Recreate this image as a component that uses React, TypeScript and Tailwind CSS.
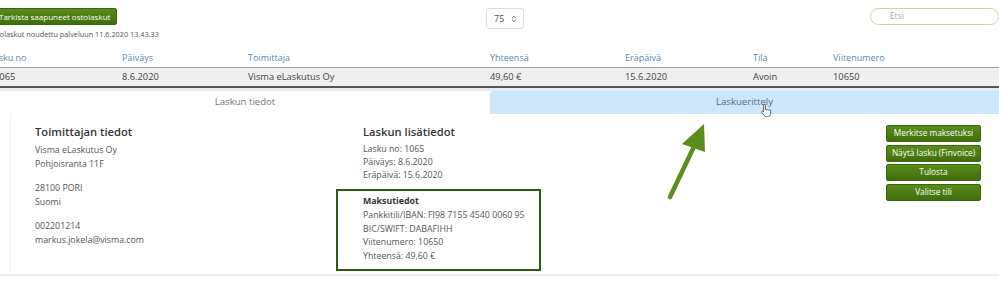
import { ChevronsUpDown } from "lucide-react";

const cols = "grid grid-cols-[122px_126px_242px_135px_128px_80px_1fr]";

function GreenButton({ label }: { label: string }) {
  return (
    <button className="w-[95px] h-[17px] rounded-[2px] border border-[#3b640c] bg-gradient-to-b from-[#5a8c1c] to-[#3f6e09] text-white text-[8.3px] leading-none whitespace-nowrap">
      {label}
    </button>
  );
}

function Arrow() {
  return (
    <svg width="60" height="90" viewBox="0 0 60 90" className="absolute left-[660px] top-[118px]">
      <line x1="10" y1="79" x2="40" y2="16" stroke="#5c8c1e" strokeWidth="4.5" strokeLinecap="round" />
      <polygon points="44,6 22,26 45,34" fill="#5c8c1e" />
    </svg>
  );
}

function Cursor() {
  return (
    <svg width="12" height="14" viewBox="0 0 12 14" className="absolute left-[761px] top-[103px]">
      <path
        d="M3.5 1.2c.6 0 1 .4 1 1v4.3l.3-.1c.5 0 1 .3 1 .8.2-.4.6-.6 1-.6.5 0 .9.4 1 .8.2-.3.5-.5.9-.5.6 0 1 .5 1 1v2.6c0 1.8-1.3 3.3-3.1 3.3H5.4c-.9 0-1.6-.4-2.1-1.1L1 9.5c-.3-.4-.2-1 .2-1.3.4-.3 1-.2 1.3.2l.1.1V2.2c0-.6.4-1 .9-1z"
        fill="#fff"
        stroke="#333"
        strokeWidth="0.8"
      />
    </svg>
  );
}

export default function App() {
  return (
    <div
      className="relative w-[999px] h-[283px] overflow-hidden bg-white text-[#444]"
      style={{ fontFamily: '"Open Sans", "Noto Sans", sans-serif' }}
    >
      {/* top bar */}
      <div className="flex items-start pt-[8px] h-[48px]">
        <div className="w-[490px]">
          <button className="block -ml-[4px] h-[17px] pl-[2px] pr-[6px] rounded-[2px] border border-[#3b640c] bg-gradient-to-b from-[#5a8c1c] to-[#3f6e09] text-white text-[8px] leading-none">
            Tarkista saapuneet ostolaskut
          </button>
          <div className="-ml-[12px] mt-[6px] text-[7.3px] text-[#555] leading-none">
            Ostolaskut noudettu palveluun 11.6.2020 13.43.33
          </div>
        </div>
        <div className="w-[387px]">
          <div className="flex items-center justify-between w-[38px] h-[21px] border border-[#ddd] rounded-[3px] pl-[7px] pr-[5px] text-[9px] text-[#555]">
            <span>75</span>
            <ChevronsUpDown className="w-[8px] h-[8px] text-[#666]" strokeWidth={3} />
          </div>
        </div>
        <div className="w-[130px] h-[17px] rounded-full border border-[#d6cfa6] pl-[19px] text-[8.5px] text-[#aaa] flex items-center">
          Etsi
        </div>
      </div>

      {/* table header */}
      <div className={`${cols} h-[19px] items-center text-[9px] text-[#5b88ad]`}>
        <div className="-ml-[11px]">Lasku no</div>
        <div>Päiväys</div>
        <div>Toimittaja</div>
        <div>Yhteensä</div>
        <div>Eräpäivä</div>
        <div>Tila</div>
        <div>Viitenumero</div>
      </div>

      {/* table row */}
      <div className={`${cols} h-[21px] items-center bg-[#efefef] border-t border-[#9a9a9a] border-b-2 border-b-[#555] text-[9.3px] text-[#444]`}>
        <div className="-ml-[6px]">1065</div>
        <div>8.6.2020</div>
        <div>Visma eLaskutus Oy</div>
        <div>49,60 €</div>
        <div>15.6.2020</div>
        <div>Avoin</div>
        <div>10650</div>
      </div>
      <div className="h-[3px] bg-[#e6eef4]" />

      {/* tabs */}
      <div className="flex h-[23px] text-[9.6px]">
        <div className="w-[490px] flex items-center justify-center text-[#777]">Laskun tiedot</div>
        <div className="flex-1 flex items-center justify-center bg-[#cde6fa] rounded-tl-[4px] text-[#5a6880]">Laskuerittely</div>
      </div>

      {/* details */}
      <div className="ml-[10px] border-l border-[#f2f4f6] h-[160px] flex pt-[9px] text-[8.8px] text-[#555] leading-[14px]">
        <div className="w-[325px] pl-[24px]">
          <div className="text-[11.2px] font-semibold text-[#333] leading-[18px] mb-[2px]">Toimittajan tiedot</div>
          <div>Visma eLaskutus Oy</div>
          <div>Pohjoisranta 11F</div>
          <div className="mt-[10px]">28100 PORI</div>
          <div>Suomi</div>
          <div className="mt-[10px]">002201214</div>
          <div>markus.jokela@visma.com</div>
        </div>
        <div className="w-[550px]">
          <div className="pl-[27px]">
            <div className="text-[11.2px] font-semibold text-[#333] leading-[18px] mb-[2px]">Laskun lisätiedot</div>
            <div className="leading-[13px]">Lasku no: 1065</div>
            <div className="leading-[13px]">Päiväys: 8.6.2020</div>
            <div className="leading-[13px]">Eräpäivä: 15.6.2020</div>
          </div>
          <div className="mt-[7px] w-[205px] h-[82px] border-2 border-[#2f5c12] pl-[25px] pt-[4px] leading-[13.8px]">
            <div className="font-bold text-[#333]">Maksutiedot</div>
            <div>Pankkitili/IBAN: FI98 7155 4540 0060 95</div>
            <div>BIC/SWIFT: DABAFIHH</div>
            <div>Viitenumero: 10650</div>
            <div>Yhteensä: 49,60 €</div>
          </div>
        </div>
        <div className="flex flex-col gap-[2.5px] pt-[2px]">
          <GreenButton label="Merkitse maksetuksi" />
          <GreenButton label="Näytä lasku (Finvoice)" />
          <GreenButton label="Tulosta" />
          <GreenButton label="Valitse tili" />
        </div>
      </div>
      <div className="h-[2px] bg-[#e2edf5]" />

      <Arrow />
      <Cursor />
    </div>
  );
}
